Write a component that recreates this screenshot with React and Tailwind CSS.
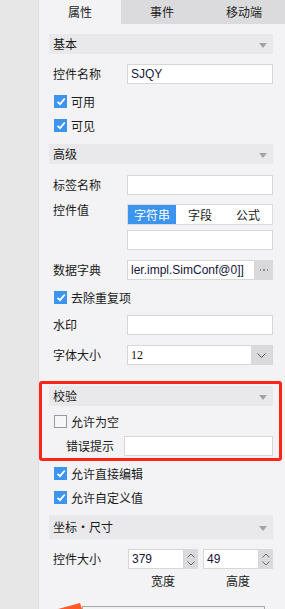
import React from 'react';

const FONT = { fontFamily: '"Noto Sans CJK SC", "Liberation Sans", sans-serif' };

function Header({ title, tall }) {
    return (
        <div className={`flex items-center justify-between bg-[#e9e9eb] pl-[4px] pr-[6px] ${tall ? 'h-[24px]' : 'h-[20px]'}`}>
            <span className="text-[12px] text-[#1a1a1a] leading-none">{title}</span>
            <svg width="8" height="5" viewBox="0 0 8 5" className="mt-[3px]">
                <polygon points="0,0 8,0 4,5" fill="#a3a3a5" />
            </svg>
        </div>
    );
}

function Check({ label, checked = true, className = '' }) {
    return (
        <div className={`flex items-center h-[13px] pl-[5px] gap-[4px] ${className}`}>
            {checked ? (
                <span className="w-[13px] h-[13px] bg-[#3c94ee] flex items-center justify-center shrink-0">
                    <svg width="10" height="9" viewBox="0 0 10 9">
                        <path d="M1.5 4.8 L4 7.2 L8.8 1.5" stroke="#fff" strokeWidth="1.8" fill="none" />
                    </svg>
                </span>
            ) : (
                <span className="w-[13px] h-[13px] border border-[#9a9a9a] bg-[#f6f6f7] shrink-0" />
            )}
            <span className="text-[12px] text-[#1a1a1a] leading-none">{label}</span>
        </div>
    );
}

function Row({ label, children, className = '' }) {
    return (
        <div className={`flex items-center ${className}`}>
            <span className="w-[78px] pl-[4px] text-[12px] text-[#1a1a1a] leading-none shrink-0">{label}</span>
            <div className="flex-1 min-w-0">{children}</div>
        </div>
    );
}

function Input({ value, className = '' }) {
    return (
        <div
            className={`h-[20px] min-w-0 bg-white border border-[#d7d7d9] flex items-center px-[3px] text-[12px] text-[#15153a] ${className}`}
            style={{ fontFamily: '"Liberation Sans", sans-serif' }}
        >
            {value}
        </div>
    );
}

function Spin({ value }) {
    return (
        <div className="flex h-[20px] w-[70px]">
            <div
                className="flex-1 bg-white border border-[#d7d7d9] flex items-center pl-[3px] text-[12px] text-[#15153a]"
                style={{ fontFamily: '"Liberation Sans", sans-serif' }}
            >
                {value}
            </div>
            <div className="w-[14px] bg-[#dadadc] flex flex-col items-center justify-center gap-[3px]">
                <svg width="8" height="5" viewBox="0 0 8 5"><path d="M0.5 4.5 L4 1 L7.5 4.5" stroke="#6b6b6b" fill="none" /></svg>
                <svg width="8" height="5" viewBox="0 0 8 5"><path d="M0.5 0.5 L4 4 L7.5 0.5" stroke="#6b6b6b" fill="none" /></svg>
            </div>
        </div>
    );
}

export default function App() {
    return (
        <div className="w-[285px] h-[609px] overflow-hidden flex bg-[#e7e7e8]" style={FONT}>
            <div className="w-[39px] shrink-0 border-r border-[#e0e0e1]" />
            <div className="w-[246px] shrink-0 min-w-0 bg-[#f3f3f5] flex flex-col">

                {/* tabs */}
                <div className="flex h-[25px] text-[12px] text-[#222]">
                    <div className="w-[82px] bg-[#f3f3f5] flex items-center justify-center">属性</div>
                    <div className="w-[82px] bg-[#dbdbdd] flex items-center justify-center">事件</div>
                    <div className="flex-1 bg-[#dbdbdd] flex items-center justify-center">移动端</div>
                </div>

                <div className="w-[246px] pl-[10px] pr-[12px] flex flex-col">
                    <div className="mt-[10px]"><Header title="基本" /></div>
                    <Row label="控件名称" className="mt-[10px]"><Input value="SJQY" /></Row>
                    <Check label="可用" className="mt-[11px]" />
                    <Check label="可见" className="mt-[11px]" />

                    <div className="mt-[12px]"><Header title="高级" /></div>
                    <Row label="标签名称" className="mt-[11px]"><Input /></Row>

                    <Row label="控件值" className="mt-[9px] items-start">
                        <div className="flex h-[21px] border border-[#dcdcde] bg-white text-[12px]">
                            <div className="w-[48px] bg-[#3c94ee] text-white flex items-center justify-center">字符串</div>
                            <div className="w-[48px] flex items-center justify-center text-[#1a1a1a]">字段</div>
                            <div className="flex-1 flex items-center justify-center text-[#1a1a1a]">公式</div>
                        </div>
                    </Row>
                    <div className="ml-[78px] mt-[5px]"><Input /></div>

                    <Row label="数据字典" className="mt-[10px]">
                        <div className="flex h-[20px]">
                            <Input value="ler.impl.SimConf@0]]" className="flex-1 overflow-hidden whitespace-nowrap" />
                            <div className="w-[18px] shrink-0 bg-[#d9d9db] flex items-center justify-center gap-[2px]">
                                <span className="w-[1.5px] h-[1.5px] bg-[#8a8a8c]" />
                                <span className="w-[1.5px] h-[1.5px] bg-[#8a8a8c]" />
                                <span className="w-[1.5px] h-[1.5px] bg-[#8a8a8c]" />
                            </div>
                        </div>
                    </Row>
                    <Check label="去除重复项" className="mt-[11px]" />

                    <Row label="水印" className="mt-[11px]"><Input /></Row>

                    <Row label="字体大小" className="mt-[10px]">
                        <div className="flex h-[20px] bg-white border border-[#d7d7d9]">
                            <span className="flex-1 flex items-center pl-[3px] text-[12px] text-[#111]" style={{ fontFamily: '"Liberation Serif", serif' }}>12</span>
                            <div className="w-[21px] bg-[#dadadc] flex items-center justify-center">
                                <svg width="9" height="5" viewBox="0 0 9 5"><path d="M0.5 0.5 L4.5 4.5 L8.5 0.5" stroke="#555" fill="none" /></svg>
                            </div>
                        </div>
                    </Row>

                    {/* highlighted validation block */}
                    <div className="mt-[16px] ml-[-10px] w-[243px] border-[3px] border-[#ff2418] rounded-[3px] pl-[7px] pr-[6px] pt-[2px] pb-[2px] flex flex-col">
                        <Header title="校验" />
                        <Check label="允许为空" checked={false} className="mt-[9px]" />
                        <div className="flex items-center mt-[8px]">
                            <span className="w-[75px] pl-[17px] text-[12px] text-[#1a1a1a] leading-none shrink-0">错误提示</span>
                            <div className="flex-1 min-w-0"><Input /></div>
                        </div>
                    </div>

                    <Check label="允许直接编辑" className="mt-[6px]" />
                    <Check label="允许自定义值" className="mt-[11px]" />

                    <div className="mt-[11px]"><Header title="坐标・尺寸" tall /></div>
                    <Row label="控件大小" className="mt-[10px]">
                        <div className="flex gap-[5px] ml-[1px]">
                            <Spin value="379" />
                            <Spin value="49" />
                        </div>
                    </Row>
                    <div className="flex ml-[79px] mt-[4px] h-[16px] text-[12px] text-[#1a1a1a] leading-none">
                        <div className="w-[70px] flex items-center justify-center">宽度</div>
                        <div className="w-[75px] pl-[5px] flex items-center justify-center">高度</div>
                    </div>

                    <div className="flex items-end mt-[14px] h-[6px] ml-[9px]">
                        <svg width="24" height="6" viewBox="0 0 24 6" className="shrink-0">
                            <polygon points="0,6 22,0 24,6" fill="#ff5a28" />
                        </svg>
                        <div className="w-[183px] h-[3px] border-t border-x border-[#a9a9ab]" />
                    </div>
                </div>
            </div>
        </div>
    );
}
